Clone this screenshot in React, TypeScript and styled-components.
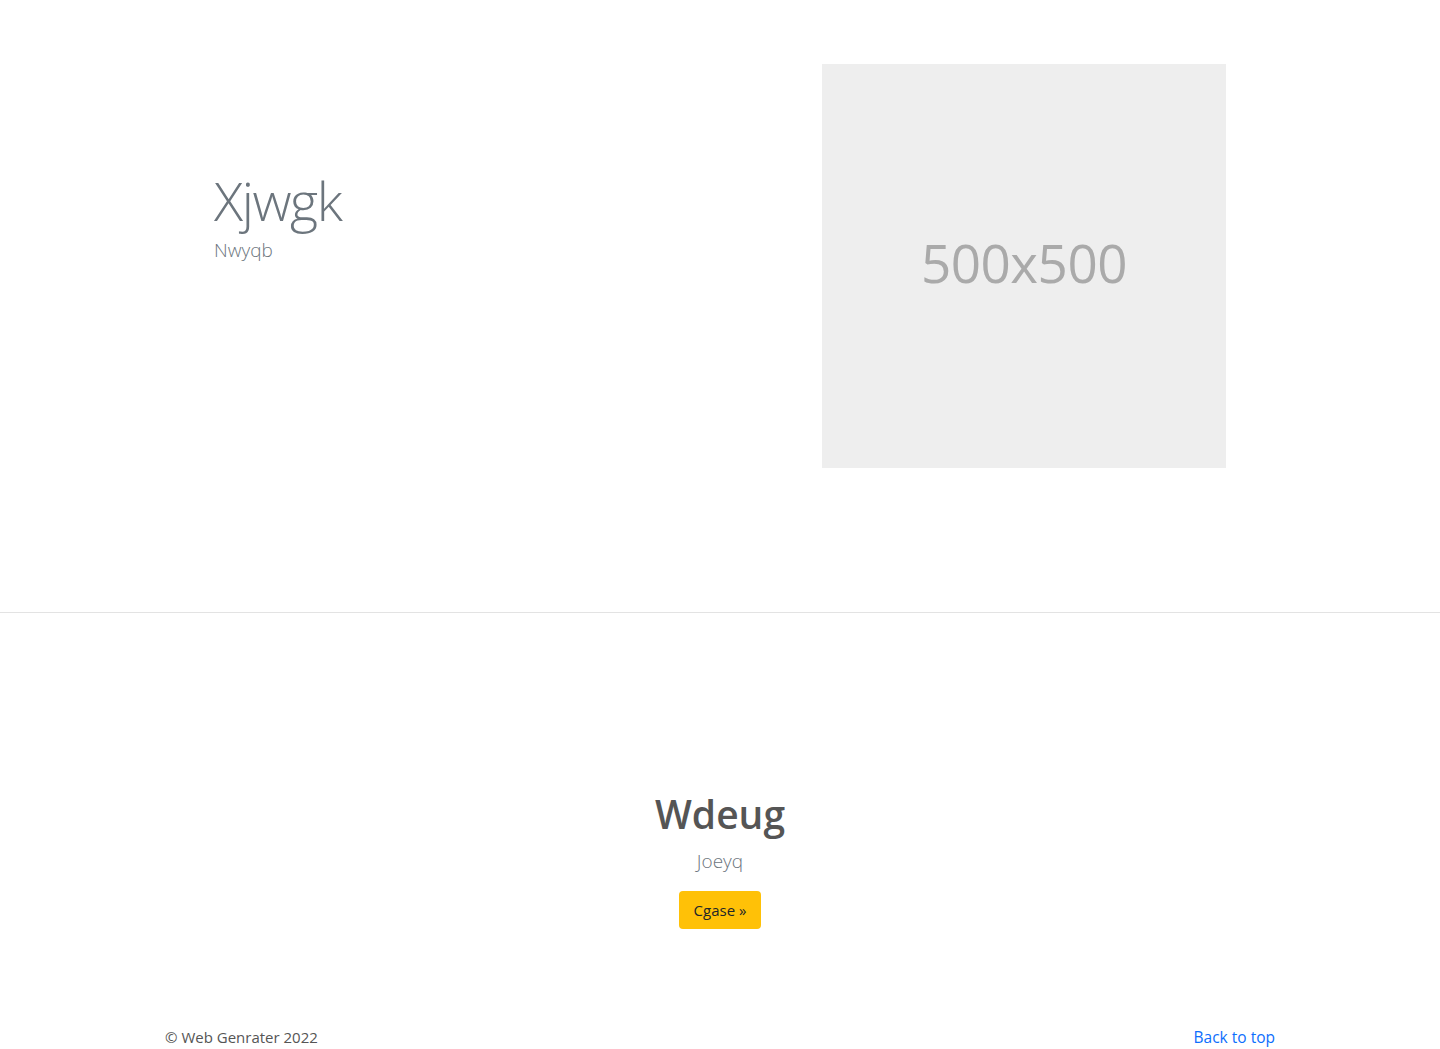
import styled, { createGlobalStyle } from 'styled-components';

const GlobalStyle = createGlobalStyle`
	body {
		margin: 0;
		background: #fff;
		font-family: "Open Sans", "Noto Sans", "Liberation Sans", sans-serif;
		color: #212529;
	}
	* {
		box-sizing: border-box;
	}
`;

const Container = styled.div`
	width: 1110px;
	margin: 0 auto;
`;

const Hero = styled.section`
	padding: 64px 0 144px;
`;

const HeroRow = styled.div`
	display: grid;
	grid-template-columns: 1fr 404px;
	align-items: start;
	padding: 0 49px;
`;

const HeroText = styled.div`
	margin-top: 104px;
	.title {
		margin: 0;
		font-size: 54px;
		font-weight: 300;
		line-height: 1.2;
		color: #6c757d;
		letter-spacing: -1.4px;
	}
	.lead {
		margin: 4px 0 0;
		font-size: 19px;
		font-weight: 300;
		color: #6c757d;
	}
`;

const Placeholder = styled.div`
	width: 404px;
	height: 404px;
	background: #eeeeee;
	display: flex;
	align-items: center;
	justify-content: center;
	color: #aaaaaa;
	font-size: 53px;
	letter-spacing: -0.5px;
	padding-bottom: 7px;
`;

const Divider = styled.hr`
	margin: 0;
	border: 0;
	border-top: 1px solid #e3e3e3;
`;

const Feature = styled.section`
	padding: 178px 0 0;
	text-align: center;
	.title {
		margin: 0;
		font-size: 39px;
		font-weight: 600;
		line-height: 1.2;
		color: #555;
	}
	.lead {
		margin: 10px 0 17px;
		font-size: 19px;
		font-weight: 300;
		color: #6c757d;
	}
`;

const Button = styled.a`
	display: inline-flex;
	align-items: center;
	justify-content: center;
	width: 82px;
	height: 38px;
	background: #ffc107;
	border-radius: 4px;
	color: #212529;
	font-size: 15px;
	text-decoration: none;
`;

const Footer = styled.footer`
	padding: 97px 0 0;
	.inner {
		display: flex;
		justify-content: space-between;
		align-items: center;
		font-size: 15px;
	}
	.copy {
		margin: 0;
		color: #555;
	}
	a {
		color: #0d6efd;
		text-decoration: none;
		font-size: 15.5px;
	}
`;

function App() {
	return (
		<>
			<GlobalStyle />
			<Hero>
				<Container>
					<HeroRow>
						<HeroText>
							<h2 className="title">Xjwgk</h2>
							<p className="lead">Nwyqb</p>
						</HeroText>
						<Placeholder>500x500</Placeholder>
					</HeroRow>
				</Container>
			</Hero>
			<Divider />
			<Feature>
				<h2 className="title">Wdeug</h2>
				<p className="lead">Joeyq</p>
				<Button href="#">Cgase »</Button>
			</Feature>
			<Footer>
				<Container className="inner">
					<p className="copy">© Web Genrater 2022</p>
					<a href="#">Back to top</a>
				</Container>
			</Footer>
		</>
	);
}

export default App;
